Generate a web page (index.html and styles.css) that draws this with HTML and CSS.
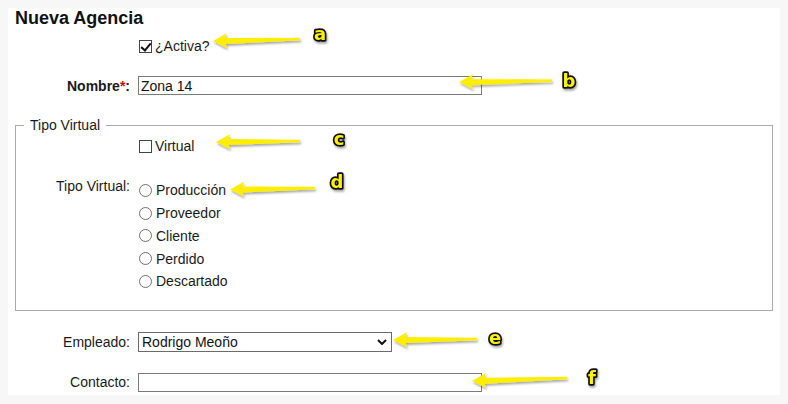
FILE: index.html
```html
<!DOCTYPE html>
<html lang="es">
<head>
    <meta charset="UTF-8">
    <meta name="viewport" content="width=device-width, initial-scale=1.0">
    <title>Nueva Agencia</title>
    <link rel="stylesheet" href="styles.css">
</head>
<body>
    <div class="panel">
        <h1 class="title">Nueva Agencia</h1>

        <div class="row row-check">
            <span class="label"></span>
            <label class="check"><input type="checkbox" checked>¿Activa?</label>
        </div>

        <div class="row row-nombre">
            <label class="label strong" for="nombre">Nombre<span class="req">*</span>:</label>
            <input class="field" id="nombre" type="text" value="Zona 14">
        </div>

        <fieldset class="group">
            <legend>Tipo Virtual</legend>

            <div class="row row-virtual">
                <span class="label"></span>
                <label class="check"><input type="checkbox">Virtual</label>
            </div>

            <div class="row row-tipo">
                <span class="label">Tipo Virtual:</span>
                <div class="options">
                    <label class="option"><input type="radio" name="tipo">Producción</label>
                    <label class="option"><input type="radio" name="tipo">Proveedor</label>
                    <label class="option"><input type="radio" name="tipo">Cliente</label>
                    <label class="option"><input type="radio" name="tipo">Perdido</label>
                    <label class="option"><input type="radio" name="tipo">Descartado</label>
                </div>
            </div>
        </fieldset>

        <div class="row row-empleado">
            <label class="label" for="empleado">Empleado:</label>
            <span class="select-wrap">
                <select id="empleado">
                    <option>Rodrigo Meoño</option>
                </select>
                <svg class="chevron" width="10" height="6" viewBox="0 0 10 6">
                    <path d="M1 1 L5 5 L9 1" fill="none" stroke="#111" stroke-width="2"/>
                </svg>
            </span>
        </div>

        <div class="row row-contacto">
            <label class="label" for="contacto">Contacto:</label>
            <input class="field" id="contacto" type="text">
        </div>
    </div>

    <!-- notas amarillas sobre el formulario -->
    <svg class="notes" width="788" height="404" viewBox="0 0 788 404">
        <defs>
            <filter id="sombra" x="-10%" y="-40%" width="130%" height="200%">
                <feDropShadow dx="1" dy="2" stdDeviation="1" flood-color="#000" flood-opacity="0.35"/>
            </filter>
        </defs>
        <g class="arrows" filter="url(#sombra)">
            <path transform="translate(213 41) rotate(-1.3)" d="M0 0 L14 -7.5 L12.5 -2.8 L87 -1.2 L87 1.2 L12.5 3.2 L14 7.5 Z"/>
            <path transform="translate(459 82) rotate(-0.9)" d="M0 0 L14 -7.5 L12.5 -2.8 L93 -1.2 L93 1.2 L12.5 3.2 L14 7.5 Z"/>
            <path transform="translate(216 142) rotate(-0.7)" d="M0 0 L14 -7.5 L12.5 -2.8 L84 -1.2 L84 1.2 L12.5 3.2 L14 7.5 Z"/>
            <path transform="translate(230 189.5) rotate(-1)" d="M0 0 L14 -7.5 L12.5 -2.8 L85 -1.2 L85 1.2 L12.5 3.2 L14 7.5 Z"/>
            <path transform="translate(393 340) rotate(-0.7)" d="M0 0 L14 -7.5 L12.5 -2.8 L84 -1.2 L84 1.2 L12.5 3.2 L14 7.5 Z"/>
            <path transform="translate(472 381) rotate(-1.8)" d="M0 0 L14 -7.5 L12.5 -2.8 L95 -1.2 L95 1.2 L12.5 3.2 L14 7.5 Z"/>
        </g>
        <g class="tags" filter="url(#sombra)">
            <text x="320" y="39.5">a</text>
            <text x="569" y="86.5">b</text>
            <text x="339" y="144.5">c</text>
            <text x="337" y="187.5">d</text>
            <text x="495" y="343.5">e</text>
            <text x="592" y="383.5">f</text>
        </g>
    </svg>
</body>
</html>
```

FILE: styles.css
```css
* {
    box-sizing: border-box;
}

body {
    margin: 8px;
    background: #f7f7f7;
    font-family: 'Liberation Sans', Arial, sans-serif;
    font-size: 14px;
    line-height: 16px;
    color: #1a1a1a;
}

.panel {
    background: #fff;
    padding: 0 7px 3px 7px;
}

.title {
    margin: 0;
    font-size: 18px;
    line-height: 21px;
    font-weight: bold;
    color: #111;
}

/* filas de etiqueta + control */
.row {
    display: grid;
    grid-template-columns: 115px 1fr;
    column-gap: 8px;
    align-items: center;
}

.label {
    text-align: right;
    white-space: nowrap;
}

.label.strong {
    font-weight: bold;
}

.req {
    color: #e00000;
}

.row-check {
    margin-top: 9px;
}

.row-nombre {
    margin-top: 22px;
}

.field {
    width: 344px;
    height: 19px;
    margin: 0;
    padding: 0 2px;
    border: 1px solid #7a7a7a;
    font-family: inherit;
    font-size: 14px;
    color: #111;
    background: #fff;
    outline: none;
}

.check,
.option {
    display: flex;
    align-items: center;
}

.check input,
.option input {
    appearance: none;
    -webkit-appearance: none;
    width: 13px;
    height: 13px;
    margin: 0 3px 0 1px;
    background: #fff;
    flex: none;
    position: relative;
}

.check input {
    border: 1px solid #444;
}

.check input:checked::after {
    content: "";
    position: absolute;
    left: 3px;
    top: 0px;
    width: 4px;
    height: 8px;
    border: solid #111;
    border-width: 0 2px 2px 0;
    transform: rotate(40deg);
}

.option input {
    border: 1px solid #6f6f6f;
    border-radius: 50%;
    margin-right: 4px;
}

/* grupo Tipo Virtual */
.group {
    margin: 22px 0 0 0;
    padding: 0 0 17px 0;
    border: 1px solid #aaaaaa;
}

.group legend {
    margin-left: 8px;
    padding: 0 6px;
    line-height: 16px;
}

.group .row {
    grid-template-columns: 114px 1fr;
}

.row-virtual {
    margin-top: 5px;
}

.row-tipo {
    margin-top: 24px;
    align-items: start;
}

.options {
    margin-top: 1px;
}

.option {
    height: 22.75px;
}

.row-empleado {
    margin-top: 21px;
}

.select-wrap {
    position: relative;
    width: 254px;
    height: 20px;
}

.select-wrap select {
    appearance: none;
    -webkit-appearance: none;
    width: 100%;
    height: 20px;
    margin: 0;
    padding: 0 0 0 3px;
    border: 1px solid #6b6b6b;
    border-radius: 0;
    background: #fff;
    font-family: inherit;
    font-size: 14px;
    color: #111;
}

.chevron {
    position: absolute;
    right: 5px;
    top: 7px;
}

.row-contacto {
    margin-top: 21px;
}

/* flechas y letras de las notas */
.notes {
    position: absolute;
    left: 0;
    top: 0;
    pointer-events: none;
}

.arrows path {
    fill: #ffee00;
}

.tags text {
    font-family: 'DejaVu Sans', sans-serif;
    font-weight: bold;
    font-size: 18px;
    text-anchor: middle;
    fill: #fff200;
    stroke: #111;
    stroke-width: 3.5px;
    stroke-linejoin: round;
    paint-order: stroke;
}
```
